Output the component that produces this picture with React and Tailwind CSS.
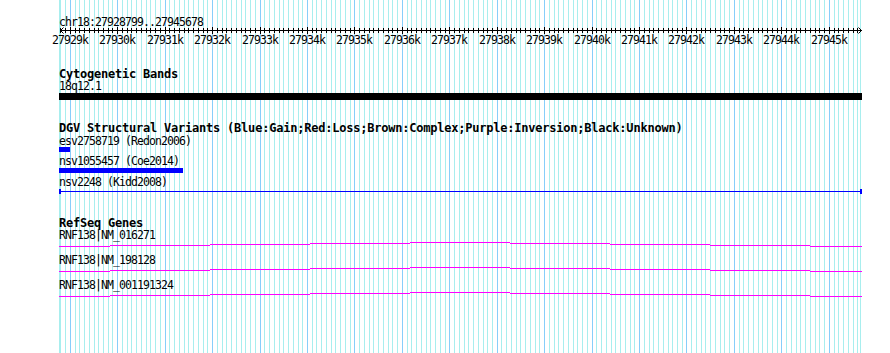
import React from 'react';

const START = 27929000;
const xOf = (pos) => Math.floor(70.3 + ((pos - START) / 1000) * 47.4375);

const gridLines = [];
for (let p = 27928800; p <= 27945600; p += 100) {
  gridLines.push({ x: xOf(p), major: p % 1000 === 0 });
}
const kbs = [];
for (let k = 27929; k <= 27945; k++) kbs.push(k);

const breaks = [59, 110, 210, 310, 410, 510, 610, 710, 810, 862];
const offsets = [4, 3, 2, 1, 0, 1, 2, 3, 4];

const genes = ['RNF138|NM_016271', 'RNF138|NM_198128', 'RNF138|NM_001191324'];

const small = "font-['DejaVu_Sans_Mono',monospace] text-[11.5px] leading-[10px] tracking-[-0.92px] text-black pl-[59px] whitespace-pre";
const bold = "font-['DejaVu_Sans_Mono',monospace] font-bold text-[12px] leading-[11px] tracking-[-0.22px] text-black pl-[59px] whitespace-pre";

function Grid() {
  return (
    <svg className="absolute inset-0" width="890" height="353" shapeRendering="crispEdges">
      <rect x="59" y="0" width="1" height="353" fill="#a8eeee" />
      <rect x="860" y="0" width="1" height="353" fill="#a8eeee" />
      {gridLines.map((g) => (
        <rect key={g.x} x={g.x} y="0" width="1" height="353" fill={g.major ? '#87cefa' : '#a8eeee'} />
      ))}
    </svg>
  );
}

function Ruler() {
  return (
    <div>
      <svg width="890" height="7" className="block" shapeRendering="crispEdges">
        <rect x="60" y="3" width="802" height="1" fill="#000" />
        {gridLines.map((g) => (
          <rect key={g.x} x={g.x} y={g.major ? 0 : 1} width="1" height={g.major ? 7 : 5} fill="#000" />
        ))}
        <path d="M60.5 3.5 L63.5 0.5 M60.5 3.5 L63.5 6.5 M861.5 3.5 L858.5 0.5 M861.5 3.5 L858.5 6.5" stroke="#000" fill="none" shapeRendering="auto" />
      </svg>
      <div className="relative h-[10px] mt-[1px] font-['DejaVu_Sans_Mono',monospace] text-[11.5px] leading-[10px] tracking-[-0.92px] text-black">
        {kbs.map((k) => (
          <span key={k} className="absolute top-0 w-[40px] text-center" style={{ left: xOf(k * 1000) - 20 }}>
            {k}k
          </span>
        ))}
      </div>
    </div>
  );
}

function GeneLine() {
  return (
    <svg width="890" height="15" className="block" shapeRendering="crispEdges">
      {offsets.map((o, i) => (
        <rect key={i} x={breaks[i]} y={2 + o} width={breaks[i + 1] - breaks[i]} height="1" fill="#ff00ff" />
      ))}
    </svg>
  );
}

export default function App() {
  return (
    <div className="relative w-[890px] h-[353px] bg-white overflow-hidden">
      <Grid />
      <div className="relative flex flex-col">
        <div className={`${small} mt-[17px] h-[10px]`}>chr18:27928799..27945678</div>
        <Ruler />

        {/* Cytogenetic bands */}
        <div className={`${bold} mt-[24px] h-[11px]`}>Cytogenetic Bands</div>
        <div className={`${small} mt-[1px] h-[10px]`}>18q12.1</div>
        <div className="mt-[2px] ml-[59px] w-[803px] h-[7px] bg-black" />

        {/* DGV */}
        <div className={`${bold} mt-[23px] h-[11px]`}>
          DGV Structural Variants (Blue:Gain;Red:Loss;Brown:Complex;Purple:Inversion;Black:Unknown)
        </div>
        <div className={`${small} mt-[2px] h-[10px]`}>esv2758719 (Redon2006)</div>
        <div className="mt-[1px] ml-[59px] w-[11px] h-[5px] bg-[#0000ff]" />
        <div className={`${small} mt-[4px] h-[10px]`}>nsv1055457 (Coe2014)</div>
        <div className="mt-[2px] ml-[59px] w-[124px] h-[5px] bg-[#0000ff]" />
        <div className={`${small} mt-[4px] h-[10px]`}>nsv2248 (Kidd2008)</div>
        <div className="mt-[1px] ml-[59px] w-[803px] h-[7px] flex items-center">
          <div className="w-[2px] h-[5px] bg-[#0000ff]" />
          <div className="flex-1 h-[1px] bg-[#0000ff]" />
          <div className="w-[2px] h-[5px] bg-[#0000ff]" />
        </div>

        {/* RefSeq */}
        <div className={`${bold} mt-[23px] h-[11px]`}>RefSeq Genes</div>
        <div className="mt-[1px] flex flex-col">
          {genes.map((g) => (
            <div key={g}>
              <div className={`${small} h-[10px]`}>{g}</div>
              <GeneLine />
            </div>
          ))}
        </div>
      </div>
    </div>
  );
}
